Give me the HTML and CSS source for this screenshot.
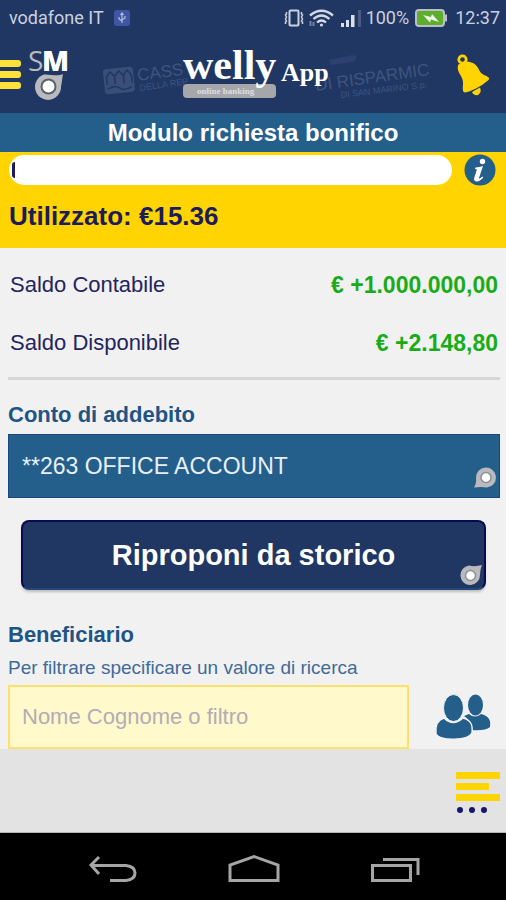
FILE: index.html
```html
<!DOCTYPE html>
<html lang="it">
<head>
<meta charset="utf-8">
<meta name="viewport" content="width=device-width, initial-scale=1">
<title>Modulo richiesta bonifico</title>
<link rel="stylesheet" href="styles.css">
</head>
<body>
<div class="status">
  <span>vodafone IT</span>
  <svg class="usb" width="16" height="16" viewBox="0 0 16 16"><rect width="16" height="16" rx="3" fill="#3f56a5"/><path d="M8 13V4M8 11L5 9V7M8 10l3-2V6M6.500 5L8 3l1.500 2" fill="none" stroke="#b4bfdf" stroke-width="1.200"/></svg>
  <div class="status-icons">
    <svg width="20" height="18" viewBox="0 0 20 18" fill="none" stroke="#cbd1df" stroke-width="2"><rect x="5.500" y="1.500" width="9" height="15" rx="1"/><path d="M2.500 3v2l-1 1 1 2-1 2 1 2-1 1v2M17.500 3v2l1 1-1 2 1 2-1 2 1 1v2" stroke-width="1.500"/></svg>
    <svg class="wifi" width="26" height="18" viewBox="0 0 26 18" fill="none" stroke="#d3d8e4" stroke-width="2.300"><path d="M2 6.500Q13.500-3 25 6.500M5.500 10Q13.500 3 21.500 10M9 13.500Q13.500 9.500 18 13.500"/><circle cx="13.500" cy="16" r="1.600" fill="#d3d8e4" stroke="none"/><path d="M2.500 12v5M5.500 13v4" stroke="#77839f" stroke-width="2"/></svg>
    <svg class="signal" width="22" height="18" viewBox="0 0 22 18" fill="#dce0ea"><path d="M1 14h3v4H1zM6 11h3v7H6zM11 6h3.500v12H11z"/><path d="M18 1h3v17h-3z" fill="#4a5c82"/></svg>
    <span>100%</span>
    <svg class="battery" width="32" height="18" viewBox="0 0 32 18"><rect x="1" y="1" width="28" height="16" rx="3" fill="#5fae2b" stroke="#b9bfca" stroke-width="2"/><path d="M30 5.500h2v7h-2z" fill="#b9bfca"/><path d="M8 6l8 2 1-3 7 8-8-2.500-1 3z" fill="#eef4e8"/></svg>
    <span>12:37</span>
  </div>
</div>

<header class="header">
  <button class="icon-button menu" aria-label="Menu">
    <svg width="21" height="30" viewBox="0 0 21 30" fill="#ffe13a"><rect x="-5" y="0" width="26" height="7" rx="3"/><rect x="-5" y="11" width="26" height="7" rx="3"/><rect x="-5" y="22" width="26" height="7" rx="3"/></svg>
  </button>
  <svg class="sm" width="46" height="60" viewBox="0 0 46 60" role="img" aria-label="SM">
    <text x="0" y="26" class="sm-s">S</text><text x="14" y="26" class="sm-m">M</text>
    <path d="M35 29C34 34 34 37 33 41.500a13 13 0 1 1-17-12C22 29 29 32 35 29z" fill="#b9babd"/>
    <circle cx="20.500" cy="41.500" r="7" fill="#fff" stroke="#59616f" stroke-width="2"/>
  </svg>
  <svg class="brand" width="330" height="62" viewBox="0 0 330 62" role="img" aria-label="welly App, online banking">
    <g transform="rotate(-6 18 28)">
      <rect x="3" y="24" width="30" height="25" rx="3" fill="#394e79"/>
      <path d="M6 40V32l4-5 4 5v8m0-8l5-5 4 5v8m0-8l4-5 4 5v8M6 44q8-4 12 0t12 0" fill="none" stroke="#203764" stroke-width="1.500"/>
    </g>
    <g class="watermark">
      <text class="wm-large" transform="translate(38 37) rotate(-8)">CASS</text>
      <text class="wm-small" transform="translate(40 47) rotate(-8)">DELLA REP</text>
      <text class="wm-large" transform="translate(216 47) rotate(-8)">DI RISPARMIC</text>
      <text class="wm-small" transform="translate(241 54) rotate(-7)">DI SAN MARINO S.p.</text>
    </g>
    <path d="M229 16l24-5 4 2-3 5-23 3z" fill="#2c4170"/>
    <rect x="83" y="40" width="93" height="14" rx="4" fill="#a6a7ab"/>
    <text x="97" y="50" class="brand-tag">online banking</text>
    <text x="83" y="35" class="brand-name">welly</text><text x="181" y="37" class="brand-app">App</text>
  </svg>
  <button class="icon-button bell" aria-label="Notifiche">
    <svg width="34" height="42" viewBox="0 0 34 42"><circle cx="6.500" cy="5.500" r="3.700" fill="none" stroke="#ffd400" stroke-width="2.800"/><path d="M2 11Q9 5 17 9c7 4 5 9 11 12q7 2.500 4.500 5Q27 31 20 34.500T9 38.500q-3 0-2-8C8 22 0 19 2 11z" fill="#ffd400"/><path d="M16 38l8-4.500q2 5-2 7.500-4 1-6-3z" fill="#ffd400"/></svg>
  </button>
</header>

<h1 class="title">Modulo richiesta bonifico</h1>

<section class="usage">
  <div class="usage-row">
    <div class="bar" role="progressbar" aria-label="Utilizzato" aria-valuenow="1" aria-valuemin="0" aria-valuemax="100"><span class="bar-fill"></span></div>
    <button class="icon-button" aria-label="Informazioni">
      <svg width="32" height="32" viewBox="0 0 32 32"><circle cx="16" cy="16" r="15.500" fill="#245e8b"/><circle cx="18.500" cy="7.500" r="2.700" fill="#fff"/><path d="M11.500 13.500q4-.5 7.500-1.500l-4 12q0 1.500 3.500-1.500l.8 1q-4 4.500-7 4-3-.7-2-4l2.500-7.500q0-1-1.800-1z" fill="#fff"/></svg>
    </button>
  </div>
  <p class="used">Utilizzato: €15.36</p>
</section>

<main class="content">
  <dl class="balances">
    <div class="balance"><dt>Saldo Contabile</dt><dd>€ +1.000.000,00</dd></div>
    <div class="balance"><dt>Saldo Disponibile</dt><dd>€ +2.148,80</dd></div>
  </dl>
  <label class="label" for="account">Conto di addebito</label>
  <div class="account">
    <select id="account" class="account-select"><option>**263 OFFICE ACCOUNT</option></select>
    <svg class="pin account-pin" width="22" height="22" viewBox="0 0 22 22"><path d="M0 20.500C3 15 2 14 2 11a10 10 0 1 1 11 9.500Q7 19.500 0 20.500z" fill="#b9babd"/><circle cx="12" cy="10.500" r="5" fill="#fff" stroke="#8b9098" stroke-width="1.500"/></svg>
  </div>
  <button class="history">Riproponi da storico
    <svg class="pin history-pin" width="22" height="22" viewBox="0 0 22 22"><path d="M22 1C20 6 20.500 8 20 11A9.800 9.800 0 1 1 9 1.500Q15 3 22 1z" fill="#b9babd"/><circle cx="10.500" cy="11.500" r="5" fill="#fff" stroke="#8b9098" stroke-width="1.500"/></svg>
  </button>
  <label class="label" for="payee">Beneficiario</label>
  <p class="hint" id="hint">Per filtrare specificare un valore di ricerca</p>
  <div class="payee-row">
    <input id="payee" class="payee" type="text" placeholder="Nome Cognome o filtro" aria-describedby="hint">
    <button class="icon-button" aria-label="Rubrica">
      <svg width="56" height="46" viewBox="0 0 56 46" fill="#245e8b"><ellipse cx="40.500" cy="11" rx="7.500" ry="10.500"/><path d="M29 22l5-2q6 5 12 0c8 2 10 6 9 13q-5 4-18 3-1-10-8-14z"/><ellipse cx="18.500" cy="14" rx="10" ry="13.500" stroke="#f1f1f1"/><path d="M9 24q9 9 19 0c8 2 10 7 9 15-4 8-32 8-36 1C0 31 2 26 9 24z" stroke="#f1f1f1" stroke-width="1.500"/></svg>
    </button>
  </div>
</main>

<footer class="toolbar">
  <button class="icon-button" aria-label="Opzioni">
    <svg width="44" height="42" viewBox="0 0 44 42"><path d="M0 0h44v7H0zM0 11h33v7H0zM0 22h44v7H0z" fill="#ffd400"/><g fill="#15166b"><circle cx="4" cy="38" r="3"/><circle cx="16" cy="38" r="3"/><circle cx="28" cy="38" r="3"/></g></svg>
  </button>
</footer>

<nav class="system" aria-label="Sistema">
  <button class="icon-button" aria-label="Indietro"><svg width="52" height="30" viewBox="0 0 52 30" fill="none" stroke="#a5a5a5" stroke-width="3"><path d="M13 2L5 10l8 9M5 10.500h35q9 1 9 7.500t-9 7.500H24"/></svg></button>
  <button class="icon-button" aria-label="Home"><svg width="52" height="30" viewBox="0 0 52 30" fill="none" stroke="#a5a5a5" stroke-width="3"><path d="M2 25.500V10L26 1.500 50 10v15.500z"/></svg></button>
  <button class="icon-button" aria-label="Recenti"><svg width="52" height="30" viewBox="0 0 52 30" fill="none" stroke="#a5a5a5" stroke-width="3"><path d="M2.500 10.500h38v15h-38zM13 4.500h35V20"/></svg></button>
</nav>
</body>
</html>
```

FILE: styles.css
```css
* { box-sizing: border-box; }
body {
  margin: 0;
  min-height: 100vh;
  display: flex;
  flex-direction: column;
  background: #f1f1f1;
  font-family: "Liberation Sans", Arial, sans-serif;
}
h1, p, dl, dd { margin: 0; }
svg { display: block; flex-shrink: 0; overflow: visible; }
button { cursor: pointer; }
.icon-button { padding: 0; border: 0; background: none; }
.menu svg { overflow: hidden; }

.status {
  display: flex;
  align-items: center;
  height: 36px;
  padding: 0 6px 0 9px;
  background: #203764;
  color: #cbd1df;
  font: 18px/24px Roboto, sans-serif;
}
.usb { margin-left: 10px; }
.status-icons { display: flex; align-items: center; margin-left: auto; }
.wifi { margin-left: 4px; }
.signal { margin: 0 4px 0 6px; }
.battery { margin: 0 8px 0 6px; }

.header {
  display: flex;
  align-items: center;
  height: 77px;
  padding-right: 16px;
  background: #203764;
}
.sm { margin-left: 7px; }
.sm-s { font: 28px "Open Sans", sans-serif; fill: #b9babd; }
.sm-m { font: 800 28px "Open Sans", sans-serif; fill: #fff; }
.brand { margin: 0 auto; }
.brand-name { font: bold 42px "Liberation Serif", serif; fill: #fff; }
.brand-app { font: bold 26px "Liberation Serif", serif; fill: #fff; }
.brand-tag { font: bold 9px "Liberation Serif", serif; fill: #dedee0; }
.watermark { fill: #3f547f; }
.wm-large { font: 17px "Liberation Sans", sans-serif; }
.wm-small { font: 9px "Liberation Sans", sans-serif; }

.title {
  height: 39px;
  background: #245e8b;
  color: #fff;
  font-size: 24px;
  line-height: 40px;
  text-align: center;
}

.usage { height: 96px; padding: 2px 10px 0 9px; background: #ffd400; }
.usage-row { display: flex; align-items: center; gap: 12px; }
.bar {
  flex: 1;
  height: 30px;
  padding: 7px 3px;
  border-radius: 15px;
  background: #fff;
}
.bar-fill { display: block; width: 3px; height: 16px; border-radius: 3px 0 0 3px; background: #1c1c5c; }
.used { margin-top: 16px; color: #1c1c5c; font-size: 26px; font-weight: bold; line-height: 28px; }

.content { flex: 1; padding: 8px 6px 0 8px; }
.balances { padding: 0 2px; border-bottom: 3px solid #d6d6d6; }
.balance { display: flex; justify-content: space-between; height: 58px; line-height: 58px; font-size: 22px; }
.balance:last-child { height: 63px; }
.balance dt { color: #24245f; }
.balance dd { color: #18ac18; font-size: 23px; font-weight: bold; }
.label { display: block; color: #1f5486; font-size: 22px; font-weight: bold; line-height: 28px; }
.balances + .label { margin-top: 21px; }
.account { position: relative; margin-top: 5px; }
.account-select {
  display: block;
  width: 100%;
  height: 64px;
  padding: 0 13px;
  appearance: none;
  border: 1px solid #17487f;
  border-radius: 0;
  background: #245e8b;
  color: #e9eff6;
  font: 23px "Liberation Sans", Arial, sans-serif;
}
.pin { position: absolute; }
.account-pin { right: 4px; bottom: 9px; }
.history {
  position: relative;
  display: block;
  width: calc(100% - 27px);
  height: 70px;
  margin: 22px 0 31px 13px;
  border: 2px solid #0a0b4e;
  border-bottom-color: #264878;
  border-radius: 8px;
  background: #203764;
  box-shadow: 0 3px 3px -1px #bcbcbc;
  color: #fff;
  font: bold 29px "Liberation Sans", Arial, sans-serif;
}
.history-pin { right: 2px; bottom: 2px; }
.hint { margin: 7px 0 5px; color: #3f6b98; font-size: 19px; line-height: 24px; }
.payee-row { display: flex; align-items: center; justify-content: space-between; padding-right: 9px; }
.payee {
  flex: 1;
  min-width: 0;
  height: 64px;
  margin-right: 26px;
  padding: 0 12px;
  border: 2px solid #ffdf70;
  border-radius: 0;
  background: #fff9cb;
  color: #24245f;
  font: 22px "Liberation Sans", Arial, sans-serif;
}
.payee::placeholder { color: #b4acb6; opacity: 1; }

.toolbar {
  display: flex;
  justify-content: flex-end;
  align-items: center;
  height: 84px;
  padding: 4px 6px 0 0;
  background: #e3e3e3;
  border-bottom: 1px solid #b5b5b5;
}
.system {
  display: flex;
  justify-content: space-between;
  align-items: center;
  height: 67px;
  padding: 6px 84px 0 86px;
  background: #000;
}
```
